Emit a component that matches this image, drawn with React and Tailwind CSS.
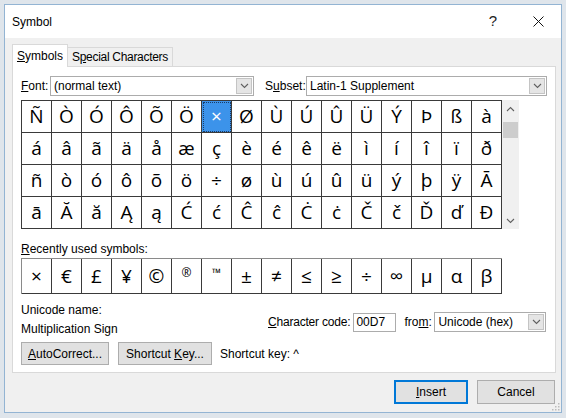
import React from "react";

const rows = [
  ["Ñ","Ò","Ó","Ô","Õ","Ö","×","Ø","Ù","Ú","Û","Ü","Ý","Þ","ß","à"],
  ["á","â","ã","ä","å","æ","ç","è","é","ê","ë","ì","í","î","ï","ð"],
  ["ñ","ò","ó","ô","õ","ö","÷","ø","ù","ú","û","ü","ý","þ","ÿ","Ā"],
  ["ā","Ă","ă","Ą","ą","Ć","ć","Ĉ","ĉ","Ċ","ċ","Č","č","Ď","ď","Đ"],
];
const recent = ["×","€","£","¥","©","®","™","±","≠","≤","≥","÷","∞","µ","α","β"];

const Chevron = ({ up }) => (
  <svg width="9" height="6" viewBox="0 0 9 6">
    <path d={up ? "M1 5 L4.5 1.5 L8 5" : "M1 1 L4.5 4.5 L8 1"} fill="none" stroke="#606060" strokeWidth="1.1" />
  </svg>
);

const Combo = ({ w, text }) => (
  <div className={`flex h-[20px] items-stretch border border-[#acacac] bg-white ${w}`}>
    <div className="flex flex-1 items-center whitespace-nowrap pl-[3px] text-[12px] leading-none">{text}</div>
    <div className="m-px flex w-[16px] items-center justify-center border border-[#c4c4c4] bg-[#e5e5e5]">
      <Chevron />
    </div>
  </div>
);

const Btn = ({ w, children, primary }) => (
  <div
    className={`flex h-[23px] items-center justify-center whitespace-nowrap bg-[#e1e1e1] text-[12px] ${w} ${
      primary ? "border-2 border-[#0078d7]" : "border border-[#adadad]"
    }`}
  >
    {children}
  </div>
);

const symFont = { fontFamily: '"Open Sans", "DejaVu Sans", sans-serif' };

export default function App() {
  return (
    <div
      className="h-[418px] w-[566px] overflow-hidden whitespace-nowrap bg-[#dfe5eb] pl-[4px] pt-[4px] text-black"
      style={{ fontFamily: '"Liberation Sans", Arial, sans-serif' }}
    >
      <div className="relative flex h-[409px] w-[558px] flex-col border border-[#93b4d3] bg-[#f0f0f0]">
        {/* title bar */}
        <div className="flex h-[33px] items-center bg-white">
          <div className="flex-1 pl-[7px] text-[12px]">Symbol</div>
          <div className="flex h-full w-[46px] items-center justify-center text-[15px] text-[#222]">?</div>
          <div className="flex h-full w-[45px] items-center justify-center">
            <svg width="11" height="11" viewBox="0 0 11 11">
              <path d="M0.5 0.5 L10.5 10.5 M10.5 0.5 L0.5 10.5" stroke="#111" strokeWidth="1" />
            </svg>
          </div>
        </div>

        <div className="flex flex-1 flex-col pl-[7px] pr-[5px]">
          {/* tabs */}
          <div className="mt-[6px] flex items-end">
            <div className="relative z-10 -mb-px flex h-[23px] w-[56px] items-center justify-center border border-b-0 border-[#d9d9d9] bg-white text-[12px]">
              <span><u>S</u>ymbols</span>
            </div>
            <div className="flex h-[19px] items-center justify-center border border-b-0 border-l-0 border-[#d9d9d9] bg-[#f0f0f0] px-[4px] text-[12px] tracking-[-0.3px]">
              <span>S<u>p</u>ecial Characters</span>
            </div>
          </div>

          {/* panel */}
          <div className="flex h-[307px] flex-col border border-[#d9d9d9] bg-white pl-[8px]">
            <div className="mt-[9px] flex items-center text-[12px]">
              <span className="w-[29px]"><u>F</u>ont:</span>
              <Combo w="w-[204px]" text="(normal text)" />
              <span className="ml-[11px] w-[41px]">S<u>u</u>bset:</span>
              <Combo w="w-[241px]" text="Latin-1 Supplement" />
            </div>

            {/* symbol grid */}
            <div className="mt-[4px] flex">
              <div className="border-l border-t border-[#3a3a3a]">
                {rows.map((r, i) => (
                  <div key={i} className="flex">
                    {r.map((c, j) => {
                      const sel = i === 0 && j === 6;
                      return (
                        <div
                          key={j}
                          className={`flex h-[32px] w-[30px] items-center justify-center border-b border-r border-[#3a3a3a] text-[19px] leading-none ${
                            sel ? "bg-[#3c93ea] text-white outline-1 outline-dotted outline-offset-[-2px] outline-[#1a3c66]" : ""
                          }`}
                          style={symFont}
                        >
                          {c}
                        </div>
                      );
                    })}
                  </div>
                ))}
              </div>
              <div className="flex w-[17px] flex-col items-center bg-[#f0f0f0]">
                <div className="flex h-[17px] items-center justify-center"><Chevron up /></div>
                <div className="mt-[5px] h-[16px] w-[15px] bg-[#cdcdcd]" />
                <div className="flex-1" />
                <div className="flex h-[17px] items-center justify-center"><Chevron /></div>
              </div>
            </div>

            <div className="mt-[12px] text-[12px] leading-[16px]">
              <u>R</u>ecently used symbols:
            </div>
            <div className="mt-[1px] flex w-fit border-l border-t border-[#8a8a8a]">
              {recent.map((c, i) => {
                const small = c === "®" || c === "™";
                return (
                  <div
                    key={i}
                    className={`flex h-[35px] w-[30px] justify-center border-b border-r border-[#3a3a3a] leading-none ${
                      small ? "items-start pt-[8px] text-[12px]" : "items-center text-[19px]"
                    }`}
                    style={symFont}
                  >
                    {c}
                  </div>
                );
              })}
            </div>

            <div className="mt-[8px] flex text-[12px]">
              <div className="flex w-[247px] flex-col leading-[16px]">
                <span>Unicode name:</span>
                <span className="mt-[3px]">Multiplication Sign</span>
              </div>
              <div className="mt-[10px] flex h-[20px] items-center">
                <span className="mr-[3px] tracking-[-0.2px]"><u>C</u>haracter code:</span>
                <div className="flex h-[19px] w-[43px] items-center border border-[#acacac] bg-white pl-[2px]">00D7</div>
                <span className="ml-[8px] w-[30px]">fro<u>m</u>:</span>
                <Combo w="w-[112px]" text="Unicode (hex)" />
              </div>
            </div>

            <div className="mt-[5px] flex items-center text-[12px]">
              <Btn w="w-[88px]"><span><u>A</u>utoCorrect...</span></Btn>
              <div className="ml-[9px]">
                <Btn w="w-[94px]"><span>Shortcut <u>K</u>ey...</span></Btn>
              </div>
              <span className="ml-[8px]">Shortcut key: ^</span>
            </div>
          </div>

          {/* footer */}
          <div className="mt-[7px] flex justify-end gap-[9px] pr-[1px] text-[12px]">
            <Btn w="w-[74px] h-[24px]" primary><span><u>I</u>nsert</span></Btn>
            <Btn w="w-[78px] h-[24px]">Cancel</Btn>
          </div>
        </div>

        <svg className="absolute bottom-[1px] right-[1px]" width="8" height="8" viewBox="0 0 8 8">
          <rect x="6" y="0" width="1.5" height="1.5" fill="#bbb" />
          <rect x="3" y="3" width="1.5" height="1.5" fill="#bbb" />
          <rect x="6" y="3" width="1.5" height="1.5" fill="#bbb" />
          <rect x="0" y="6" width="1.5" height="1.5" fill="#bbb" />
          <rect x="3" y="6" width="1.5" height="1.5" fill="#bbb" />
          <rect x="6" y="6" width="1.5" height="1.5" fill="#bbb" />
        </svg>
      </div>
    </div>
  );
}
